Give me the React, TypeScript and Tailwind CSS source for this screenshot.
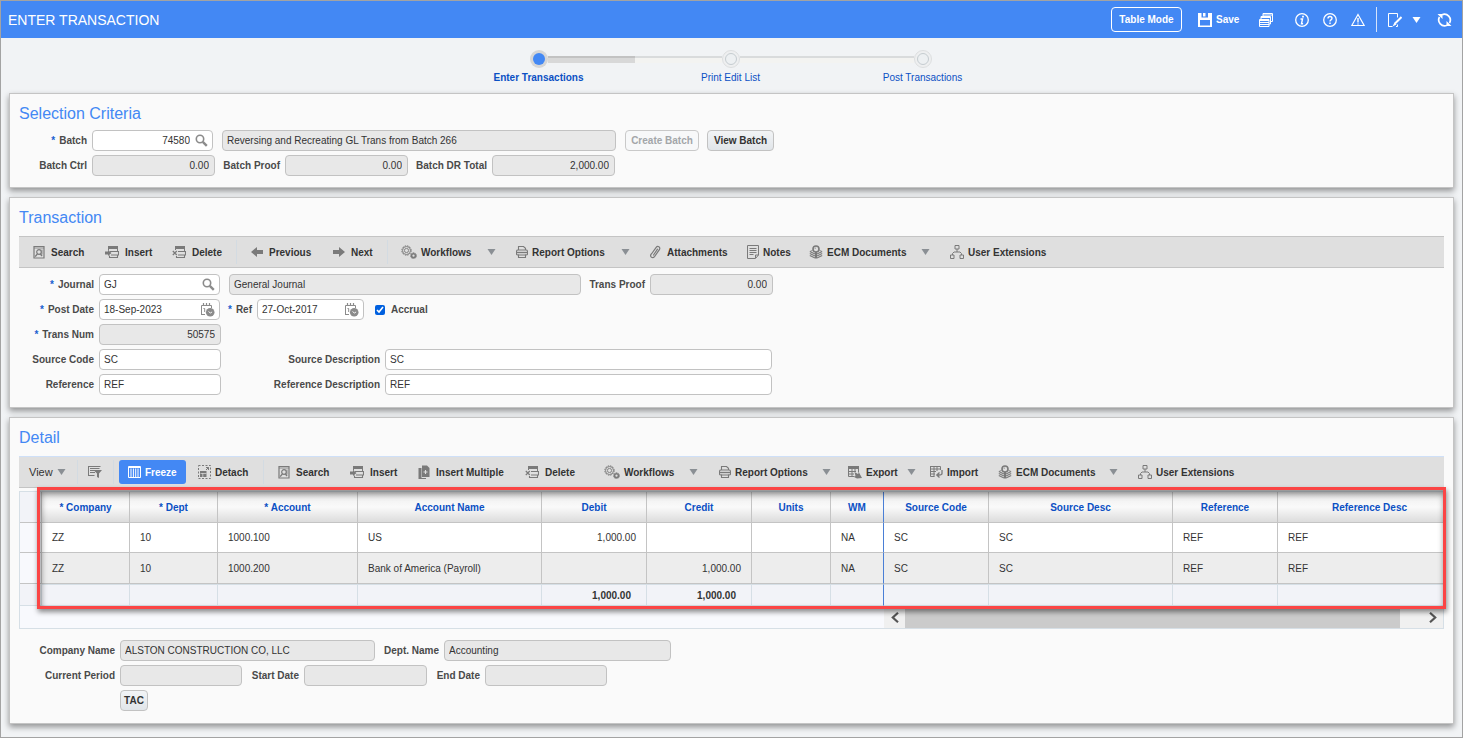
import type { ReactNode } from "react";
import clsx from "clsx";

/* ---------- Icons ---------- */

type IconProps = { w?: number; h?: number; children: ReactNode };

function Icon({ w = 14, h = 14, children }: IconProps) {
  return (
    <svg
      width={w}
      height={h}
      viewBox={`0 0 ${w} ${h}`}
      fill="none"
      stroke="currentColor"
      className="shrink-0"
      aria-hidden="true"
    >
      {children}
    </svg>
  );
}

const SearchDocIcon = () => (
  <Icon w={12}>
    <path d="M1 1.500h10v11.500H1z" strokeWidth="1.200" />
    <path d="M1 3h10M9 4.500v5" strokeWidth="0.800" />
    <circle cx="6" cy="7" r="2.300" strokeWidth="1.200" />
    <path d="M4.400 8.800L2.200 11.700M7.500 9l1.500 2" strokeWidth="1.400" />
  </Icon>
);

const InsertIcon = () => (
  <Icon>
    <path d="M3 1h10v3H3z" fill="currentColor" stroke="none" />
    <path d="M5 6.500h8.500v3.500H6M4.500 10.500v2h8V10" strokeWidth="1.100" />
    <path d="M3.500 4v1.500M12.500 4v2" />
    <path d="M0 6.500h3V5l3.500 3L3 11V9.500H0z" fill="currentColor" stroke="none" />
  </Icon>
);

const DeleteIcon = () => (
  <Icon>
    <path d="M3 1h10v3H3z" fill="currentColor" stroke="none" />
    <path d="M6 6.500h7.500v3.500H6M4.500 11v1.500h8V10" strokeWidth="1.100" />
    <path d="M3.500 4v1M12.500 4v2" />
    <path d="M.8 6l4 4M4.800 6l-4 4" strokeWidth="1.200" />
  </Icon>
);

const PrevIcon = () => (
  <Icon w={12}>
    <path d="M0 7l6-5v3h6v4H6v3z" fill="currentColor" stroke="none" />
  </Icon>
);

const NextIcon = () => (
  <Icon w={12}>
    <path d="M12 7L6 2v3H0v4h6v3z" fill="currentColor" stroke="none" />
  </Icon>
);

const GearsIcon = () => (
  <Icon w={16}>
    <circle cx="5.500" cy="5.500" r="4.700" strokeWidth="1" strokeDasharray="1.500 0.960" />
    <circle cx="5.500" cy="5.500" r="4" strokeWidth="0.900" />
    <circle cx="5.500" cy="5.500" r="2.100" strokeWidth="0.900" />
    <circle cx="12.500" cy="10.700" r="3" strokeWidth="0.900" strokeDasharray="1.200 0.680" />
    <circle cx="12.500" cy="10.700" r="1.900" strokeWidth="1.500" />
  </Icon>
);

const PrinterIcon = () => (
  <Icon w={12}>
    <path d="M2.500 5V1.500h5l2 1.800V5" strokeWidth="1.100" />
    <path d="M2 5h8q1.500 0 1.500 1.500V9q0 1-1.500 1H2Q.5 10 .5 9V6.500Q.5 5 2 5z" strokeWidth="1.100" />
    <path d="M1 7.500h10" strokeWidth="1.300" />
    <path d="M2.500 9.500v3h7v-3" strokeWidth="1.100" />
  </Icon>
);

const ClipIcon = () => (
  <Icon w={12}>
    <path
      d="M2.800 8.500L7 2.600q1.300-1.700 2.900-.8 1.500 1.100.5 2.900l-4.900 6.900q-1.300 1.600-3 .7-1.500-1.200-.5-2.900l.8-1.100M4.500 10L8.500 4.200"
      strokeWidth="1.200"
      strokeLinecap="round"
    />
  </Icon>
);

const NotesIcon = () => (
  <Icon w={12}>
    <path d="M.5.500h11v9.500l-3 3.500h-8z" />
    <path d="M2.500 3.500h7M2.500 5.500h7M2.500 7.500h7M2.500 9.500h4" />
    <path d="M8.500 13v-3h3" />
  </Icon>
);

const EcmIcon = () => (
  <Icon>
    <circle cx="7" cy="4" r="3" strokeWidth="1.600" />
    <path d="M6 3.800q.1-1 1.100-1.100" strokeWidth="0.700" />
    <path d="M7 7v6.500" strokeWidth="2" />
    <path d="M.8 6.500L6 9M.8 8.500L6 11M.8 10.500L6 13M13.200 6.500L8 9M13.200 8.500L8 11M13.200 10.500L8 13" strokeWidth="1.100" />
    <path d="M1 6.500l2.500-1.200M13 6.500l-2.500-1.200" strokeWidth="0.800" />
  </Icon>
);

const TreeIcon = () => (
  <Icon>
    <path d="M5 .5h4v3.500H5z M.5 10h3.500v3.500H.5z M10 10h3.500v3.500H10z" />
    <path d="M7 4v3M2.500 10V8.500l1.500-1.500h6l1.500 1.500V10" />
  </Icon>
);

const FilterIcon = () => (
  <Icon>
    <path d="M0 1.500h12.500M.5 1v10M0 10.500h6.500" />
    <path d="M2 3.500h9.500M2 5.500h5M2 7.500h5" strokeWidth="1.200" />
    <path d="M5.500 5H14l-3 3.500V13l-2-1V8.500z" fill="currentColor" stroke="none" />
  </Icon>
);

const FreezeIcon = () => (
  <Icon w={13}>
    <path d="M.5 1.500h12v11H.5z M0 2.500h13" />
    <path d="M3 3.500V12M5.400 3.500V12M7.700 3.500V12M10 3.500V12" />
  </Icon>
);

const DetachIcon = () => (
  <Icon w={13}>
    <path d="M.5.500h12v13H.5z" strokeDasharray="2 1.500" />
    <path d="M2 6h6.500v6H2z" fill="currentColor" stroke="none" />
    <path d="M2.500 8.500h6M4.800 8v4" stroke="#dfdfdf" strokeWidth="0.700" />
    <path d="M8 5l2.500-2.500M8 2.500h2.500V5" />
  </Icon>
);

const MultiIcon = () => (
  <Icon w={12}>
    <path d="M4 .5h5L11.500 3v9H4z" fill="currentColor" stroke="none" />
    <path d="M.5 3h3v10H8v1H.5z" fill="currentColor" stroke="none" />
    <path d="M7.500 5v4M5.500 7h4" stroke="#dfdfdf" strokeWidth="1.100" />
  </Icon>
);

const ExportIcon = () => (
  <Icon>
    <path d="M0 1h11v3H0z" fill="currentColor" stroke="none" />
    <path d="M.5 1.500h10v6M.5 1v10.500h6M0 6.500h8M0 9h6M4 1v10.500M7 1v6" />
    <path d="M6.500 7l3.500 2 1-1.500 3 5.500-5 .5-3-1.500 1.500-1z" fill="currentColor" stroke="none" />
  </Icon>
);

const ImportIcon = () => (
  <Icon w={13}>
    <path d="M.5 1.500h10v3.500M.5 1v10.500h4M0 4h11M0 6.500h6M0 9h5M4 1v10.500M7 1v5" />
    <path d="M12 5v3.500q0 1.500-3 1.500H7M9.500 7.500L6.800 10l2.700 2.500" strokeWidth="1.300" />
  </Icon>
);

const SaveIcon = () => (
  <Icon>
    <path d="M0 0h14v14H0z" fill="currentColor" stroke="none" />
    <path d="M3.500 0h6.500v4.500H3.500z M2 7h10v5.500H2z" fill="#4388f4" stroke="none" />
    <path d="M5 0h2.500v3.500H5z" fill="currentColor" stroke="none" />
  </Icon>
);

const CopyIcon = () => (
  <Icon>
    <path d="M4 3V.5h9.500v8H12M4 2h9.500" />
    <path d="M2 6V3.500h9.500V11H10M2 4.500h9.500" />
    <path d="M.5 6.500h9.500v7H.5z" />
    <path d="M0 7.500h10M1 9.500h9M1 11.500h9" strokeWidth="1.200" />
  </Icon>
);

const RoundIcon = ({ children }: { children: ReactNode }) => (
  <Icon>
    <circle cx="7" cy="7" r="6.300" strokeWidth="1.300" />
    {children}
  </Icon>
);

const WarnIcon = () => (
  <Icon>
    <path d="M7 1.500L13.200 12.500H.8z" strokeWidth="1.200" />
    <path d="M7 5v4.500M7 10.500v1" strokeWidth="1.400" />
  </Icon>
);

const EditIcon = () => (
  <Icon>
    <path d="M9.500 4.500v-4h-9v13h4M9.500 11.500v2H8" />
    <path d="M13.500 4L7 10.500" strokeWidth="2" />
    <path d="M6.500 9.500L4.500 13.500l4-2" fill="currentColor" stroke="none" />
  </Icon>
);

const RefreshIcon = () => (
  <Icon w={15}>
    <path d="M5 1.700A5.900 5.900 0 0 1 12.500 10M10 12.300A5.900 5.900 0 0 1 2.500 4" strokeWidth="1.700" />
    <path d="M.5 1h5v5z M14.500 13h-5V8z" fill="currentColor" stroke="none" />
  </Icon>
);

const LensIcon = () => (
  <Icon w={13} h={13}>
    <circle cx="5" cy="5" r="3.700" strokeWidth="1.600" />
    <path d="M7.800 7.800l4 4" strokeWidth="2.400" />
  </Icon>
);

const CalendarIcon = () => (
  <Icon w={15} h={15}>
    <path d="M1.500 13V3.500h10V6M1 12.500h4" />
    <path d="M3.500 1v3M9.500 1v3M6.500 1v2" strokeWidth="1.200" />
    <path d="M3.500 6.500h1.200V10" />
    <circle cx="10.200" cy="10.200" r="4.300" fill="currentColor" stroke="none" />
    <path d="M8.500 9.500l1.800 1.500 1.800-1" stroke="#fff" strokeWidth="0.900" />
  </Icon>
);

const CaretDown = () => (
  <svg width="9" height="6" viewBox="0 0 9 6" fill="currentColor" className="shrink-0" aria-hidden="true">
    <path d="M.5 0h8L4.500 6z" />
  </svg>
);

/* ---------- Form parts ---------- */

type FieldProps = {
  id: string;
  label?: string;
  name?: string;
  value: string;
  required?: boolean;
  readOnly?: boolean;
  right?: boolean;
  icon?: ReactNode;
  labelClass?: string;
  className: string;
};

function Field({ id, label, name, value, required, readOnly, right, icon, labelClass, className }: FieldProps) {
  return (
    <div className="flex items-center">
      {label && (
        <label htmlFor={id} className={clsx("text-right text-[10px] leading-4 font-bold whitespace-nowrap text-[#4a4a4a]", labelClass)}>
          {required && <span className="mr-1 text-[#1a5fd0]">*</span>}
          {label}
        </label>
      )}
      <div
        className={clsx(
          "flex h-[21px] items-center rounded-[4px] border border-[#c2c2c2]",
          label && "ml-[5px]",
          readOnly ? "bg-[#e8e8e8]" : "bg-white",
          className
        )}
      >
        <input
          id={id}
          type="text"
          aria-label={label ? undefined : name}
          defaultValue={value}
          readOnly={readOnly}
          className={clsx(
            "h-full w-full min-w-0 bg-transparent pr-[5px] pl-1 text-[10px] text-[#333] outline-none",
            right && "text-right"
          )}
        />
        {icon && (
          <button type="button" aria-label={`Pick ${label}`} className="mr-1 text-[#8b8b8b]">
            {icon}
          </button>
        )}
      </div>
    </div>
  );
}

function Panel({ title, children, className }: { title: string; children: ReactNode; className?: string }) {
  return (
    <section
      className={clsx(
        "border border-[#c4c4c4] bg-[#fafafa] px-[9px] pt-2 shadow-[0_3px_6px_rgba(0,0,0,0.4)]",
        className
      )}
    >
      <h2 className="text-base leading-6 text-[#4388f4]">{title}</h2>
      {children}
    </section>
  );
}

type ToolProps = { icon: ReactNode; label: string; className: string; tight?: boolean };

function Tool({ icon, label, className, tight }: ToolProps) {
  return (
    <button
      type="button"
      className={clsx("flex shrink-0 items-center text-[10px] font-bold whitespace-nowrap text-[#333]", tight ? "gap-1" : "gap-1.5", className)}
    >
      <span className="text-[#7a7a7a]">{icon}</span>
      {label}
    </button>
  );
}

function Caret({ label, className }: { label: string; className: string }) {
  return (
    <button type="button" aria-label={`${label} menu`} className={clsx("flex h-4 shrink-0 items-center text-[#8a8f94]", className)}>
      <CaretDown />
    </button>
  );
}

const Divider = () => <span className="h-6 w-px shrink-0 bg-[#d3dbe2]" />;

/* ---------- Page data ---------- */

const columns = [
  { title: "Company", required: true, width: "w-[88px]" },
  { title: "Dept", required: true, width: "w-[88px]" },
  { title: "Account", required: true, width: "w-[140px]" },
  { title: "Account Name", width: "w-[184px]" },
  { title: "Debit", width: "w-[105px]", numeric: true },
  { title: "Credit", width: "w-[105px]", numeric: true },
  { title: "Units", width: "w-[79px]", numeric: true },
  { title: "WM", width: "w-[53px]", frozenEdge: true },
  { title: "Source Code", width: "w-[105px]" },
  { title: "Source Desc", width: "w-[184px]" },
  { title: "Reference", width: "w-[105px]" },
  { title: "Reference Desc", width: "w-[184px]" },
];

const rows = [
  ["ZZ", "10", "1000.100", "US", "1,000.00", "", "", "NA", "SC", "SC", "REF", "REF"],
  ["ZZ", "10", "1000.200", "Bank of America (Payroll)", "", "1,000.00", "", "NA", "SC", "SC", "REF", "REF"],
];

const totals = ["", "", "", "", "1,000.00", "1,000.00", "", "", "", "", "", ""];

const steps = ["Enter Transactions", "Print Edit List", "Post Transactions"];

/* ---------- Sections ---------- */

function Header() {
  return (
    <header className="flex h-[37px] items-center bg-[#4388f4] pr-[10px] pl-[7px] text-white">
      <h1 className="text-sm">ENTER TRANSACTION</h1>
      <button type="button" className="ml-auto h-[25px] w-[71px] rounded-[4px] border border-white text-[10px] font-bold">
        Table Mode
      </button>
      <button type="button" className="ml-4 flex w-11 items-center gap-1 text-[10px] font-bold">
        <SaveIcon />
        Save
      </button>
      <button type="button" aria-label="Forms" className="ml-[17px]">
        <CopyIcon />
      </button>
      <div className="ml-[22px] flex items-center gap-[14px]">
        <button type="button" aria-label="Info">
          <RoundIcon>
            <path d="M8 2.800v1.600" strokeWidth="1.800" />
            <path d="M5.500 6h2L6.500 10.800h1.600" strokeWidth="1.400" />
          </RoundIcon>
        </button>
        <button type="button" aria-label="Help">
          <RoundIcon>
            <path d="M5 5.500q0-2 2-2t2 1.800q0 1-1 1.600T7 8.500" strokeWidth="1.400" />
            <path d="M7 9.500v1.500" strokeWidth="1.500" />
          </RoundIcon>
        </button>
        <button type="button" aria-label="Warnings">
          <WarnIcon />
        </button>
      </div>
      <span className="ml-[11px] h-[25px] w-px bg-[#d5e3fb]" />
      <button type="button" aria-label="Edit" className="ml-[11px]">
        <EditIcon />
      </button>
      <button type="button" aria-label="Edit menu" className="ml-[10px]">
        <CaretDown />
      </button>
      <button type="button" aria-label="Refresh" className="ml-4">
        <RefreshIcon />
      </button>
    </header>
  );
}

function Stepper() {
  return (
    <ol className="flex h-[55px] justify-center pt-3 pr-0.5">
      {steps.map((step, i) => {
        const bar = "h-[7px] flex-1 border-t-2";
        const hidden = "border-transparent";
        const light = "border-[#d9dbdc] bg-[#f3f3f1]";
        return (
          <li key={step} className="w-48">
            <div className="flex h-[18px] items-center">
              <span className={clsx(bar, i === 0 ? hidden : light)} />
              <span
                className={clsx(
                  "flex size-[18px] items-center justify-center rounded-full",
                  i === 0 ? "bg-[#d6d6d6]" : "border border-[#dddfe0] bg-[#eeeff0]"
                )}
              >
                <span className={clsx("size-3 rounded-full", i === 0 ? "bg-[#4388f4]" : "border border-[#c5ccd0] bg-[#edf0f2]")} />
              </span>
              <span className={clsx(bar, i === 0 ? "border-[#c2c2c2] bg-[#d8d8d8]" : i === 2 ? hidden : light)} />
            </div>
            <a
              href="#"
              className={clsx("mt-0.5 block text-center text-[10px] leading-4 text-[#0b50c4]", i === 0 && "font-bold")}
            >
              {step}
            </a>
          </li>
        );
      })}
    </ol>
  );
}

function SelectionCriteria() {
  return (
    <Panel title="Selection Criteria" className="pb-[11px]">
      <div className="mt-1 flex flex-col gap-1">
        <div className="flex items-center">
          <Field id="batch" label="Batch" required right value="74580" icon={<LensIcon />} labelClass="w-[68px]" className="w-[121px]" />
          <div className="ml-[9px]">
            <Field id="batch-desc" name="Batch description" readOnly value="Reversing and Recreating GL Trans from Batch 266" className="w-[394px]" />
          </div>
          <button type="button" disabled className="ml-[9px] h-[21px] w-[74px] rounded-[4px] border border-[#c9c9c9] bg-[#f7f8f9] text-[10px] font-bold text-[#a3a6a9]">
            Create Batch
          </button>
          <button type="button" className="ml-2 h-[21px] w-[67px] rounded-[4px] border border-[#c2c2c2] bg-linear-to-b from-[#f2f4f6] to-[#e1e5e9] text-[10px] font-bold text-[#333]">
            View Batch
          </button>
        </div>
        <div className="flex items-center">
          <Field id="batch-ctrl" label="Batch Ctrl" readOnly right value="0.00" labelClass="w-[68px]" className="w-[123px]" />
          <Field id="batch-proof" label="Batch Proof" readOnly right value="0.00" labelClass="w-[65px]" className="w-[123px]" />
          <Field id="batch-dr" label="Batch DR Total" readOnly right value="2,000.00" labelClass="w-[79px]" className="w-[123px]" />
        </div>
      </div>
    </Panel>
  );
}

function Transaction() {
  return (
    <Panel title="Transaction" className="pb-3">
      <div className="mt-1.5 flex h-8 items-center overflow-hidden border-y border-[#c4c4c4] bg-[#dfdfdf] pl-[14px]">
        <Tool icon={<SearchDocIcon />} label="Search" className="w-[72px]" />
        <Tool icon={<InsertIcon />} label="Insert" className="w-[67px]" />
        <Tool icon={<DeleteIcon />} label="Delete" className="w-[64px]" />
        <Divider />
        <Tool icon={<PrevIcon />} label="Previous" className="ml-[14px] w-[82px]" />
        <Tool icon={<NextIcon />} label="Next" className="w-[54px]" />
        <Divider />
        <Tool icon={<GearsIcon />} label="Workflows" tight className="ml-[13px] w-[86px]" />
        <Caret label="Workflows" className="w-[29px]" />
        <Tool icon={<PrinterIcon />} label="Report Options" tight className="w-[105px]" />
        <Caret label="Report Options" className="w-7" />
        <Tool icon={<ClipIcon />} label="Attachments" className="w-[98px]" />
        <Tool icon={<NotesIcon />} label="Notes" tight className="w-[62px]" />
        <Tool icon={<EcmIcon />} label="ECM Documents" tight className="w-[112px]" />
        <Caret label="ECM Documents" className="w-[29px]" />
        <Tool icon={<TreeIcon />} label="User Extensions" tight className="w-[100px]" />
      </div>
      <div className="mt-1.5 flex flex-col gap-1">
        <div className="flex items-center">
          <Field id="journal" label="Journal" required value="GJ" icon={<LensIcon />} labelClass="w-[75px]" className="w-[121px]" />
          <div className="ml-[9px]">
            <Field id="journal-desc" name="Journal description" readOnly value="General Journal" className="w-[352px]" />
          </div>
          <Field id="trans-proof" label="Trans Proof" readOnly right value="0.00" labelClass="w-[64px]" className="w-[123px]" />
        </div>
        <div className="flex items-center">
          <Field id="post-date" label="Post Date" required value="18-Sep-2023" icon={<CalendarIcon />} labelClass="w-[75px]" className="w-[121px]" />
          <Field id="ref-date" label="Ref" required value="27-Oct-2017" icon={<CalendarIcon />} labelClass="w-8" className="w-[107px]" />
          <label className="ml-[11px] flex items-center gap-1.5 text-[10px] font-bold text-[#4a4a4a]">
            <input type="checkbox" defaultChecked className="size-[10px] accent-[#0060df]" />
            Accrual
          </label>
        </div>
        <Field id="trans-num" label="Trans Num" required readOnly right value="50575" labelClass="w-[75px]" className="w-[122px]" />
        <div className="flex items-center">
          <Field id="source-code" label="Source Code" value="SC" labelClass="w-[75px]" className="w-[122px]" />
          <Field id="source-desc" label="Source Description" value="SC" labelClass="w-[159px]" className="w-[387px]" />
        </div>
        <div className="flex items-center">
          <Field id="reference" label="Reference" value="REF" labelClass="w-[75px]" className="w-[122px]" />
          <Field id="reference-desc" label="Reference Description" value="REF" labelClass="w-[159px]" className="w-[387px]" />
        </div>
      </div>
    </Panel>
  );
}

function DetailToolbar() {
  return (
    <div className="mt-1.5 flex h-8 items-center overflow-hidden border-t border-b border-t-[#cfe0f8] border-b-[#c4c4c4] bg-[#dfdfdf] pl-[10px]">
      <button type="button" className="flex w-12 shrink-0 items-center gap-1 text-[11px] text-[#333]">
        View
        <span className="text-[#8a8f94]">
          <CaretDown />
        </span>
      </button>
      <Divider />
      <button type="button" aria-label="Query by example" className="ml-[10px] w-[25px] shrink-0 text-[#7a7a7a]">
        <FilterIcon />
      </button>
      <Divider />
      <button type="button" className="ml-[5px] flex h-6 w-[67px] shrink-0 items-center gap-1 rounded-[3px] bg-[#4388f4] pl-[9px] text-[10px] font-bold text-white">
        <FreezeIcon />
        Freeze
      </button>
      <Tool icon={<DetachIcon />} label="Detach" className="ml-3 w-[65px]" tight />
      <Divider />
      <Tool icon={<SearchDocIcon />} label="Search" className="ml-[14px] w-[72px]" />
      <Tool icon={<InsertIcon />} label="Insert" className="w-[68px]" />
      <Tool icon={<MultiIcon />} label="Insert Multiple" className="w-[107px]" />
      <Tool icon={<DeleteIcon />} label="Delete" className="w-[79px]" />
      <Tool icon={<GearsIcon />} label="Workflows" tight className="w-[85px]" />
      <Caret label="Workflows" className="w-[30px]" />
      <Tool icon={<PrinterIcon />} label="Report Options" tight className="w-[103px]" />
      <Caret label="Report Options" className="w-[26px]" />
      <Tool icon={<ExportIcon />} label="Export" tight className="w-[59px]" />
      <Caret label="Export" className="w-[23px]" />
      <Tool icon={<ImportIcon />} label="Import" tight className="w-[68px]" />
      <Tool icon={<EcmIcon />} label="ECM Documents" tight className="w-[111px]" />
      <Caret label="ECM Documents" className="w-[29px]" />
      <Tool icon={<TreeIcon />} label="User Extensions" tight className="w-[100px]" />
    </div>
  );
}

function DetailTable() {
  const edge = (i: number) => (columns[i].frozenEdge ? "border-r-[#4a7fd6]" : "border-r-[#c4c4c4]");
  return (
    <div className="relative mt-[3px]">
      <div className="overflow-hidden border border-[#d6dfe6] bg-[#f8f9fd]">
        <table className="w-[1442px] table-fixed border-separate border-spacing-0 text-[10px] text-[#333]">
          <thead>
            <tr className="h-[31px]">
              <th aria-label="Row" className="w-[22px] border-r border-b border-[#c4c4c4] bg-[#f2f3f8]" />
              {columns.map((col, i) => (
                <th
                  key={col.title}
                  scope="col"
                  className={clsx(
                    "border-r border-b border-b-[#c4c4c4] bg-linear-to-b from-[#ececec] via-[#fafafa] to-[#dcdcdc] p-0 font-bold text-[#0b50c4]",
                    edge(i),
                    col.width
                  )}
                >
                  {col.required && "* "}
                  {col.title}
                </th>
              ))}
            </tr>
          </thead>
          <tbody>
            {rows.map((row, r) => (
              <tr key={row[2]} className={r === 0 ? "h-[30px]" : "h-[31px]"}>
                <td className="border-r border-b border-[#c4c4c4] bg-[#f8f9fd]" />
                {row.map((cell, i) => (
                  <td
                    key={columns[i].title}
                    className={clsx(
                      "border-r border-b border-b-[#c4c4c4] px-[10px] py-0",
                      edge(i),
                      r === 0 ? "bg-white" : "bg-[#ededed]",
                      columns[i].numeric && "text-right"
                    )}
                  >
                    {cell}
                  </td>
                ))}
              </tr>
            ))}
          </tbody>
          <tfoot>
            <tr className="h-[22px]">
              <td className="border-r border-b border-[#d6dfe6] bg-[#f2f3f8]" />
              {totals.map((total, i) => (
                <td
                  key={columns[i].title}
                  className={clsx(
                    "border-t border-r border-b border-t-[#d6dfe6] border-b-[#d6dfe6] bg-[#f2f3f8] py-0 pr-[15px] text-right font-bold",
                    columns[i].frozenEdge ? "border-r-[#4a7fd6]" : "border-r-[#d6dfe6]"
                  )}
                >
                  {total}
                </td>
              ))}
            </tr>
          </tfoot>
        </table>
        <div className="flex h-[22px] pl-[864px]">
          <button type="button" aria-label="Scroll left" className="flex w-[21px] items-center justify-center bg-[#f0f0f0] text-[#555]">
            <svg width="8" height="11" viewBox="0 0 8 11" fill="none" stroke="currentColor" strokeWidth="2.200" aria-hidden="true">
              <path d="M7 .8L1.800 5.500 7 10.200" />
            </svg>
          </button>
          <div className="flex-1 bg-[#cbcbcb]" />
          <button type="button" aria-label="Scroll right" className="flex w-[43px] items-center justify-end bg-[#f0f0f0] pr-1.5 text-[#555]">
            <svg width="8" height="11" viewBox="0 0 8 11" fill="none" stroke="currentColor" strokeWidth="2.200" aria-hidden="true">
              <path d="M1 .8l5.200 4.700L1 10.200" />
            </svg>
          </button>
        </div>
      </div>
      {/* callout frame round the data rows */}
      <div className="pointer-events-none absolute -top-1 -right-[2px] bottom-[20px] left-[18px] border-3 border-[#fb4545] shadow-[1px_3px_5px_rgba(0,0,0,0.45),inset_1px_4px_6px_rgba(0,0,0,0.45)]" />
    </div>
  );
}

function Detail() {
  return (
    <Panel title="Detail" className="pb-3">
      <DetailToolbar />
      <DetailTable />
      <div className="mt-[11px] flex flex-col gap-1">
        <div className="flex items-center">
          <Field id="company-name" label="Company Name" readOnly value="ALSTON CONSTRUCTION CO, LLC" labelClass="w-24" className="w-[255px]" />
          <Field id="dept-name" label="Dept. Name" readOnly value="Accounting" labelClass="w-16" className="w-[227px]" />
        </div>
        <div className="flex items-center">
          <Field id="current-period" label="Current Period" readOnly value="" labelClass="w-24" className="w-[122px]" />
          <Field id="start-date" label="Start Date" readOnly value="" labelClass="w-[57px]" className="w-[123px]" />
          <Field id="end-date" label="End Date" readOnly value="" labelClass="w-[53px]" className="w-[122px]" />
        </div>
        <button type="button" className="ml-[101px] h-[21px] w-7 rounded-[4px] border border-[#c2c2c2] bg-linear-to-b from-[#f2f4f6] to-[#e1e5e9] text-[10px] font-bold text-[#333]">
          TAC
        </button>
      </div>
    </Panel>
  );
}

export default function App() {
  return (
    <div className="min-h-screen border border-[#a3a3a3] bg-[#f1f3f5] font-['Liberation_Sans',Arial,sans-serif]">
      <Header />
      <Stepper />
      <main className="flex flex-col gap-[9px] pr-2 pl-2">
        <SelectionCriteria />
        <Transaction />
        <Detail />
      </main>
    </div>
  );
}
